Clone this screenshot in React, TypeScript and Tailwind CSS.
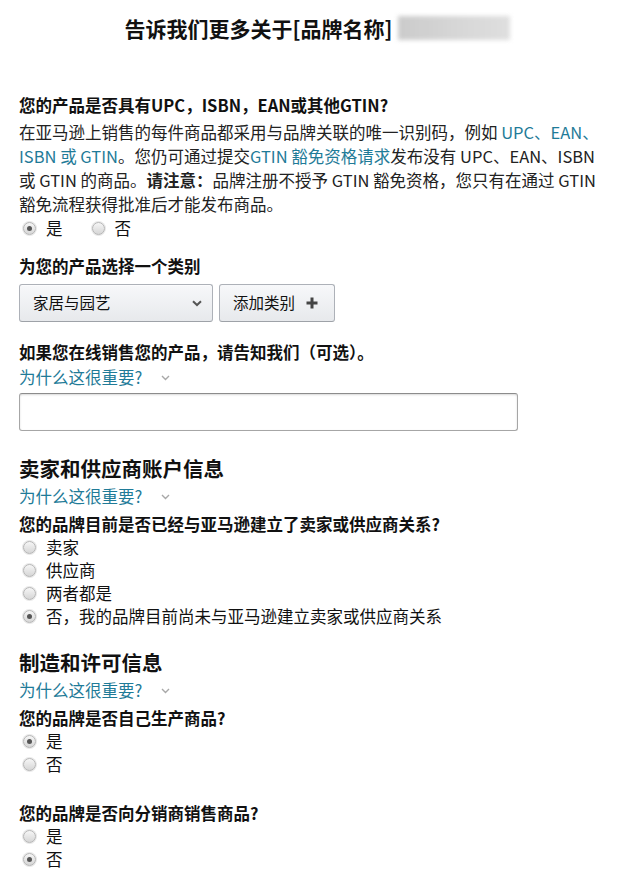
import React, { useState } from "react";

const linkColor = "text-[#1f7b98]";

function Radio({ checked, label, onClick }: { checked: boolean; label: string; onClick: () => void }) {
  return (
    <div onClick={onClick} className="flex items-center h-[23px] cursor-pointer">
      <div className="w-[13px] h-[13px] ml-[4px] rounded-full border border-[#b5b5b5] bg-gradient-to-b from-[#f6f6f6] to-[#d6d6d6] shadow-[0_0_0_1px_#e8e8e8] flex items-center justify-center">
        {checked && <div className="w-[5px] h-[5px] rounded-full bg-[#555]" />}
      </div>
      <span className="ml-[10px] text-[16.5px]">{label}</span>
    </div>
  );
}

function WhyLink() {
  return (
    <div className={`flex items-center h-6 text-[16.5px] ${linkColor}`}>
      <span>为什么这很重要?</span>
      <svg width="9" height="6" viewBox="0 0 9 6" className="ml-[19px] mt-[1px]">
        <path d="M1 1 L4.5 4.5 L8 1" stroke="#a8a8a8" strokeWidth="1.4" fill="none" />
      </svg>
    </div>
  );
}

function RadioList({ options, initial }: { options: string[]; initial: number }) {
  const [selected, setSelected] = useState(initial);
  return (
    <div className="flex flex-col">
      {options.map((o, i) => (
        <Radio key={o} label={o} checked={selected === i} onClick={() => setSelected(i)} />
      ))}
    </div>
  );
}

export default function App() {
  const [hasGtin, setHasGtin] = useState("yes");

  return (
    <div className="w-[618px] min-h-[882px] bg-white px-[19px] text-[#111] font-['Noto_Sans_CJK_SC','Noto_Sans',sans-serif]">
      {/* title */}
      <div className="pt-[14px] pl-[17px] flex justify-center items-center gap-[6px]">
        <h1 className="text-[21px] leading-[28px] font-bold">告诉我们更多关于[品牌名称]</h1>
        <div className="w-[112px] h-[24px] bg-gradient-to-r from-[#c6c6c6] via-[#d2d2d2] to-[#dcdcdc] blur-[2px] opacity-90" />
      </div>

      {/* gtin */}
      <div className="mt-[51px] text-[16.5px] leading-6 font-bold">
        您的产品是否具有UPC，ISBN，EAN或其他GTIN?
      </div>
      <p className="mt-[3px] text-[16.5px] leading-6 text-[#222]">
        在亚马逊上销售的每件商品都采用与品牌关联的唯一识别码，例如 <span className={linkColor}>UPC、EAN、</span>
        <br />
        <span className={linkColor}>ISBN 或 GTIN</span>。您仍可通过提交<span className={linkColor}>GTIN 豁免资格请求</span>发布没有 UPC、EAN、ISBN
        <br />
        或 GTIN 的商品。<span className="font-bold">请注意：</span>品牌注册不授予 GTIN 豁免资格，您只有在通过 GTIN
        <br />
        豁免流程获得批准后才能发布商品。
      </p>
      <div className="flex items-center h-6 gap-[25px]">
        <Radio label="是" checked={hasGtin === "yes"} onClick={() => setHasGtin("yes")} />
        <Radio label="否" checked={hasGtin === "no"} onClick={() => setHasGtin("no")} />
      </div>

      {/* category */}
      <div className="mt-[14px] text-[16.5px] leading-6 font-bold">为您的产品选择一个类别</div>
      <div className="mt-[6px] flex gap-[6px]">
        <div className="w-[194px] h-[38px] rounded-[3px] border border-[#adb1b8] border-b-[#9ea2a8] bg-gradient-to-b from-[#f7f8fa] to-[#e7e9ec] shadow-[0_1px_0_rgba(255,255,255,0.6)_inset] flex items-center justify-between pl-[13px] pr-[10px]">
          <span className="text-[15.5px]">家居与园艺</span>
          <svg width="10" height="7" viewBox="0 0 10 7">
            <path d="M1 1.2 L5 5 L9 1.2" stroke="#555" strokeWidth="2" fill="none" />
          </svg>
        </div>
        <div className="w-[116px] h-[38px] rounded-[3px] border border-[#adb1b8] border-b-[#9ea2a8] bg-gradient-to-b from-[#f7f8fa] to-[#e7e9ec] flex items-center pl-[13px] gap-[11px]">
          <span className="text-[15.5px]">添加类别</span>
          <svg width="12" height="12" viewBox="0 0 12 12">
            <path d="M6 0.5 V11.5 M0.5 6 H11.5" stroke="#444" strokeWidth="3" />
          </svg>
        </div>
      </div>

      {/* online */}
      <div className="mt-[18px] text-[16.5px] leading-6 font-bold">如果您在线销售您的产品，请告知我们（可选）。</div>
      <div className="mt-[1px]">
        <WhyLink />
      </div>
      <div className="mt-[4px] w-[499px] h-[38px] rounded-[3px] border border-[#a6a6a6] border-t-[#8c8c8c] bg-white shadow-[0_1px_2px_rgba(0,0,0,0.15)_inset]" />

      {/* seller / vendor */}
      <h2 className="mt-[23px] text-[20.5px] leading-[28px] font-bold">卖家和供应商账户信息</h2>
      <div className="mt-[2px]">
        <WhyLink />
      </div>
      <div className="mt-[4px] text-[16.5px] leading-6 font-bold">您的品牌目前是否已经与亚马逊建立了卖家或供应商关系?</div>
      <RadioList
        options={["卖家", "供应商", "两者都是", "否，我的品牌目前尚未与亚马逊建立卖家或供应商关系"]}
        initial={3}
      />

      {/* manufacturing */}
      <h2 className="mt-[20px] text-[20.5px] leading-[28px] font-bold">制造和许可信息</h2>
      <div className="mt-[2px]">
        <WhyLink />
      </div>
      <div className="mt-[4px] text-[16.5px] leading-6 font-bold">您的品牌是否自己生产商品?</div>
      <RadioList options={["是", "否"]} initial={0} />

      <div className="mt-[25px] text-[16.5px] leading-6 font-bold">您的品牌是否向分销商销售商品?</div>
      <RadioList options={["是", "否"]} initial={1} />
    </div>
  );
}
